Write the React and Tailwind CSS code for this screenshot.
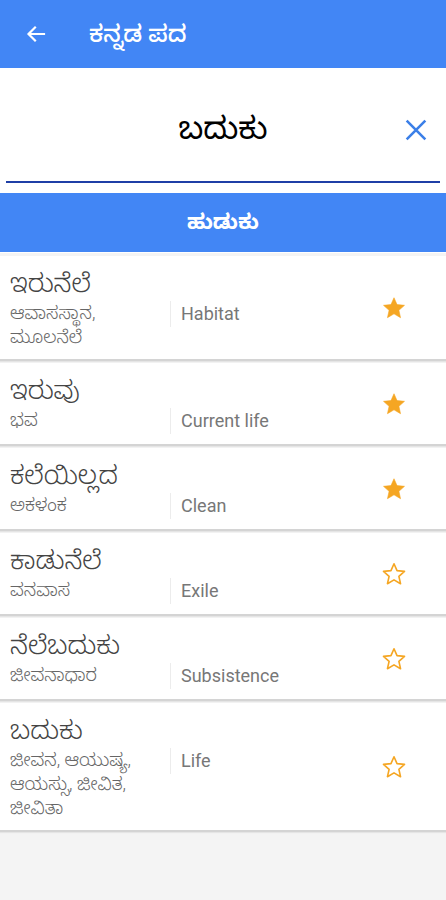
import React from "react";

const items = [
  { w: "ಇರುನೆಲೆ", s: ["ಆವಾಸಸ್ಥಾನ,", "ಮೂಲನೆಲೆ"], e: "Habitat", fav: true },
  { w: "ಇರುವು", s: ["ಭವ"], e: "Current life", fav: true },
  { w: "ಕಲೆಯಿಲ್ಲದ", s: ["ಅಕಳಂಕ"], e: "Clean", fav: true },
  { w: "ಕಾಡುನೆಲೆ", s: ["ವನವಾಸ"], e: "Exile", fav: false },
  { w: "ನೆಲೆಬದುಕು", s: ["ಜೀವನಾಧಾರ"], e: "Subsistence", fav: false },
  { w: "ಬದುಕು", s: ["ಜೀವನ, ಆಯುಷ್ಯ,", "ಆಯಸ್ಸು, ಜೀವಿತ,", "ಜೀವಿತಾ"], e: "Life", fav: false },
];

function Star({ filled }) {
  return (
    <svg width="28" height="28" viewBox="0 0 24 24">
      <path
        d="M12 3.2l2.6 5.9 6.4.6-4.8 4.3 1.4 6.3L12 17l-5.6 3.3 1.4-6.3L3 9.7l6.4-.6z"
        fill={filled ? "#f5a623" : "none"}
        stroke="#f5a623"
        strokeWidth={filled ? 0.5 : 1.4}
        strokeLinejoin="round"
      />
    </svg>
  );
}

export default function App() {
  const font = { fontFamily: 'Roboto, "Noto Sans Kannada", "Noto Sans", sans-serif' };
  return (
    <div className="w-[446px] h-[900px] bg-[#f4f4f4] overflow-hidden" style={font}>
      <div className="h-[68px] bg-[#4286f5] flex items-center">
        <svg className="ml-[24px]" width="24" height="24" viewBox="0 0 24 24" fill="none" stroke="white" strokeWidth="2.2" strokeLinecap="square">
          <path d="M20 12H5M11 5.5L4.5 12 11 18.5" />
        </svg>
        <span className="ml-[41px] text-white text-[24px] font-medium">ಕನ್ನಡ ಪದ</span>
      </div>
      <div className="bg-white h-[185px] relative">
        <div className="h-[113px] flex items-center justify-center pt-[10px]">
          <span className="text-black text-[31px] font-normal">ಬದುಕು</span>
        </div>
        <div className="absolute right-[16px] top-[48px]">
          <svg width="28" height="28" viewBox="0 0 24 24" fill="none" stroke="#3b7fe8" strokeWidth="2.2">
            <path d="M4 4l16 16M20 4L4 20" />
          </svg>
        </div>
        <div className="mx-[6px] h-[2px] bg-[#1f3fa6]" />
        <div className="mt-[10px] h-[59px] bg-[#4286f5] flex items-center justify-center">
          <span className="text-white text-[21px] font-bold">ಹುಡುಕು</span>
        </div>
      </div>
      <div className="flex flex-col gap-[2px] pt-[3px]">
        {items.map((it, i) => (
          <div key={i} className="bg-white border-b-2 border-[#d4d4d4] flex items-center shadow-[0_1px_1px_rgba(0,0,0,0.06)]">
            <div className="flex-1 pl-[10px] pt-[12px] pb-[10px]">
              <div className="text-[26px] leading-[30px] text-[#444] font-light">{it.w}</div>
              <div className="flex mt-[3px]">
                <div className="w-[160px] text-[18px] leading-[24px] text-[#666] font-light">
                  {it.s.map((l, j) => (
                    <div key={j}>{l}</div>
                  ))}
                </div>
                <div className="self-start border-l border-[#ececec] pl-[10px] h-[26px] text-[18px] leading-[26px] text-[#777]">
                  {it.e}
                </div>
              </div>
            </div>
            <div className="w-[100px] flex justify-center pr-[4px]">
              <Star filled={it.fav} />
            </div>
          </div>
        ))}
      </div>
    </div>
  );
}
